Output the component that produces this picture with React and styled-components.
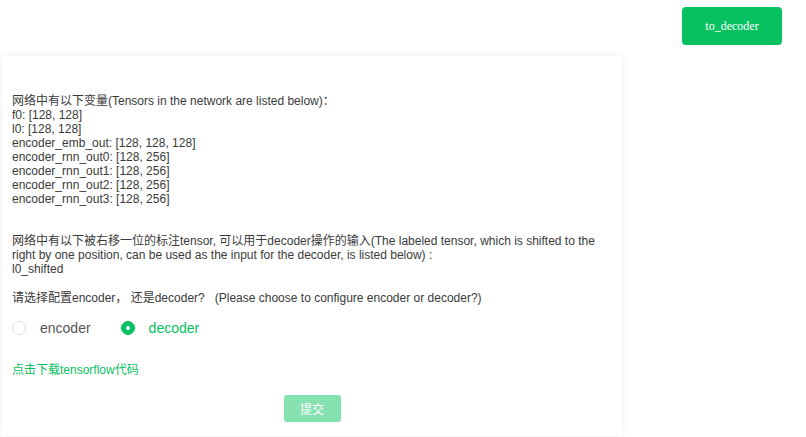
import React, { useState } from "react"
import styled, { createGlobalStyle } from "styled-components"

const GlobalStyle = createGlobalStyle`
  body {
    margin: 0;
    padding: 0;
    background: #fff;
    font-family: "Liberation Sans", Arial, "Noto Sans CJK SC", sans-serif;
  }
`

const Tela = styled.div`
  width: 806px;
  min-height: 437px;
  display: flex;
  flex-direction: column;
`

const TopCard = styled.div`
  width: 403px;
  height: 0;
  box-shadow: 0 1px 8px rgba(0, 0, 0, 0.07);
`

const Header = styled.div`
  display: flex;
  justify-content: flex-end;
  padding: 7px 24px 0 0;
  height: 38px;
  margin-bottom: 11px;
`

const ToDecoder = styled.button`
  width: 100px;
  height: 38px;
  border: 0;
  border-radius: 4px;
  background: #07c160;
  color: #fff;
  font-family: "Liberation Serif", "Times New Roman", serif;
  font-size: 12px;
  cursor: pointer;
`

const Card = styled.div`
  margin-left: 2px;
  width: 600px;
  padding: 38px 10px 14px 10px;
  background: #fff;
  box-shadow: 0 0 8px rgba(0, 0, 0, 0.08);
  display: flex;
  flex-direction: column;
`

const Bloco = styled.div`
  font-size: 12px;
  line-height: 14px;
  color: #3a3a3a;
  margin-bottom: ${p => p.gap || 0}px;
`

const Linha = styled.div``

const Radios = styled.div`
  display: flex;
  align-items: center;
  gap: 30px;
  margin-bottom: 27px;
`

const RadioItem = styled.label`
  display: flex;
  align-items: center;
  gap: 14px;
  font-size: 14px;
  color: ${p => (p.checked ? "#07c160" : "#555")};
  cursor: pointer;
`

const Circle = styled.span`
  width: 14px;
  height: 14px;
  box-sizing: border-box;
  border-radius: 50%;
  border: 1px solid ${p => (p.checked ? "#07c160" : "#dcdfe6")};
  background: ${p => (p.checked ? "#07c160" : "#fff")};
  display: flex;
  align-items: center;
  justify-content: center;
  &::after {
    content: "";
    width: 4px;
    height: 4px;
    border-radius: 50%;
    background: #fff;
    display: ${p => (p.checked ? "block" : "none")};
  }
`

const Link = styled.a`
  font-size: 12px;
  line-height: 14px;
  color: #07c160;
  text-decoration: none;
  margin-bottom: 18px;
`

const Footer = styled.div`
  display: flex;
  justify-content: center;
`

const Submit = styled.button`
  width: 57px;
  height: 27px;
  border: 0;
  border-radius: 3px;
  background: #86e1b0;
  color: #fff;
  font-size: 12px;
  font-family: "Liberation Sans", "Noto Sans CJK SC", sans-serif;
`

const tensors = [
  "f0: [128, 128]",
  "l0: [128, 128]",
  "encoder_emb_out: [128, 128, 128]",
  "encoder_rnn_out0: [128, 256]",
  "encoder_rnn_out1: [128, 256]",
  "encoder_rnn_out2: [128, 256]",
  "encoder_rnn_out3: [128, 256]",
]

export default function App() {
  const [modo, setModo] = useState("decoder")

  return (
    <Tela>
      <GlobalStyle />
      <TopCard />
      <Header>
        <ToDecoder>to_decoder</ToDecoder>
      </Header>
      <Card>
        <Bloco gap={28}>
          <Linha>网络中有以下变量(Tensors in the network are listed below)：</Linha>
          {tensors.map(t => (
            <Linha key={t}>{t}</Linha>
          ))}
        </Bloco>
        <Bloco gap={15}>
          <Linha>
            网络中有以下被右移一位的标注tensor, 可以用于decoder操作的输入(The labeled tensor, which is shifted to the
            right by one position, can be used as the input for the decoder, is listed below) :
          </Linha>
          <Linha>l0_shifted</Linha>
        </Bloco>
        <Bloco gap={15}>
          <Linha>请选择配置encoder， 还是decoder?&nbsp;&nbsp; (Please choose to configure encoder or decoder?)</Linha>
        </Bloco>
        <Radios>
          {["encoder", "decoder"].map(m => (
            <RadioItem key={m} checked={modo === m} onClick={() => setModo(m)}>
              <Circle checked={modo === m} />
              {m}
            </RadioItem>
          ))}
        </Radios>
        <Link href="#">点击下载tensorflow代码</Link>
        <Footer>
          <Submit disabled>提交</Submit>
        </Footer>
      </Card>
    </Tela>
  )
}
